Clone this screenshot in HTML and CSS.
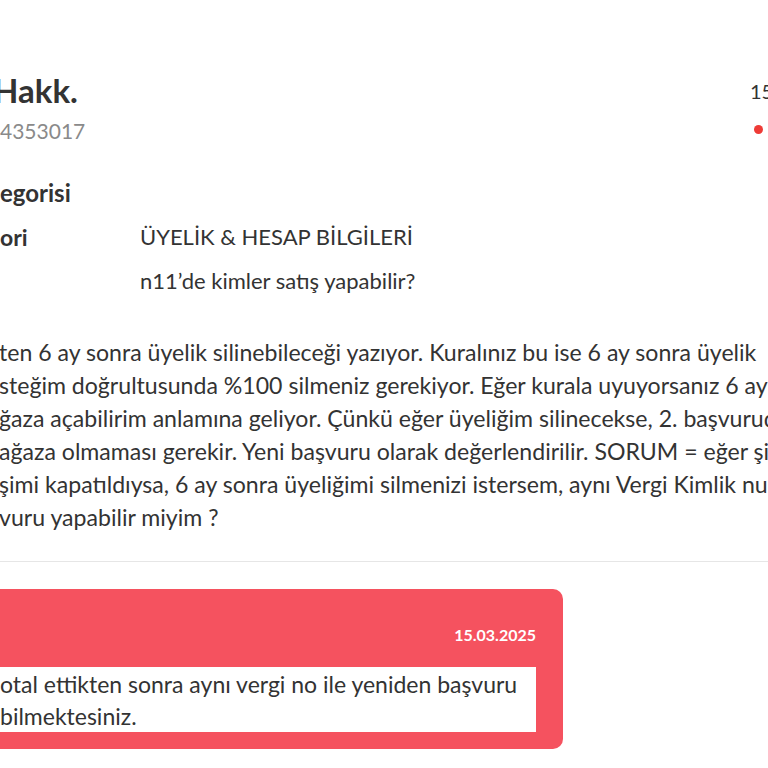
FILE: index.html
```html
<!DOCTYPE html>
<html lang="tr">
<head>
<meta charset="utf-8">
<title>Talep Detayı</title>
<link rel="stylesheet" href="styles.css">
</head>
<body>
<div class="page">
  <header class="head">
    <div class="head-left">
      <h1 class="title">Hakk.</h1>
      <div class="ticket">4353017</div>
    </div>
    <div class="head-right">
      <div class="date">15.03.2025</div>
      <div class="status"><span class="dot"></span><span class="status-text">Çözüldü</span></div>
    </div>
  </header>

  <section class="info">
    <h2 class="info-title">egorisi</h2>
    <div class="row"><span class="label">ori</span><span class="value">ÜYELİK &amp; HESAP BİLGİLERİ</span></div>
    <div class="row"><span class="label"></span><span class="value">n11’de kimler satış yapabilir?</span></div>
  </section>

  <p class="message">ten 6 ay sonra üyelik silinebileceği yazıyor. Kuralınız bu ise 6 ay sonra üyelik<br>steğim doğrultusunda %100 silmeniz gerekiyor. Eğer kurala uyuyorsanız 6 ay sonra<br>ğaza açabilirim anlamına geliyor. Çünkü eğer üyeliğim silinecekse, 2. başvuruda<br>ağaza olmaması gerekir. Yeni başvuru olarak değerlendirilir. SORUM = eğer şimdi<br>şimi kapatıldıysa, 6 ay sonra üyeliğimi silmenizi istersem, aynı Vergi Kimlik numarası<br>vuru yapabilir miyim ?</p>

  <hr class="sep">

  <div class="reply">
    <div class="reply-date">15.03.2025</div>
    <div class="reply-body">otal ettikten sonra aynı vergi no ile yeniden başvuru<br>bilmektesiniz.</div>
  </div>
</div>
</body>
</html>
```

FILE: styles.css
```css
html, body {
  margin: 0;
  padding: 0;
  background: #ffffff;
}
body {
  width: 768px;
  height: 768px;
  overflow: hidden;
  font-family: Lato, "Open Sans", sans-serif;
  color: #333333;
}
.page {
  width: 850px;
  padding-top: 70px;
}
.head {
  display: grid;
  grid-template-columns: 1fr 100px;
}
.title {
  margin: 0 0 0 -7px;
  font-size: 33px;
  font-weight: 700;
  line-height: 40px;
  color: #333333;
}
.ticket {
  margin-top: 8px;
  font-size: 21px;
  line-height: 26px;
  color: #8a8a8a;
}
.date {
  margin-top: 9px;
  font-size: 20px;
  line-height: 24px;
  color: #333333;
  white-space: nowrap;
}
.status {
  margin-top: 17px;
  display: flex;
  align-items: center;
  gap: 8px;
  white-space: nowrap;
  font-size: 16px;
}
.dot {
  display: inline-block;
  width: 9px;
  height: 9px;
  border-radius: 50%;
  background: #ee3b36;
  margin-left: 4px;
}
.info {
  margin-top: 35px;
}
.info-title {
  margin: 0;
  font-size: 24px;
  font-weight: 700;
  line-height: 28px;
  color: #333333;
}
.row {
  display: grid;
  grid-template-columns: 140px 1fr;
  margin-top: 15px;
  font-size: 22px;
  line-height: 30px;
}
.row + .row {
  margin-top: 14px;
}
.label {
  font-weight: 700;
  font-size: 23px;
}
.value {
  color: #333333;
}
.message {
  margin: 40px 0 0 -1px;
  font-size: 23.1px;
  line-height: 33px;
  white-space: nowrap;
  color: #333333;
}
.sep {
  margin: 27px 0 0;
  border: 0;
  border-top: 1px solid #e6e6e6;
  height: 0;
}
.reply {
  margin: 27px 0 0 -20px;
  width: 583px;
  box-sizing: border-box;
  background: #f5525f;
  border-radius: 10px;
  padding: 36px 27px 17px 0;
}
.reply-date {
  text-align: right;
  color: #ffffff;
  font-weight: 700;
  font-size: 16px;
  line-height: 20px;
}
.reply-body {
  margin-top: 22px;
  background: #ffffff;
  padding: 1px 0 0 20px;
  font-size: 23px;
  line-height: 32px;
  white-space: nowrap;
  color: #333333;
}
```
